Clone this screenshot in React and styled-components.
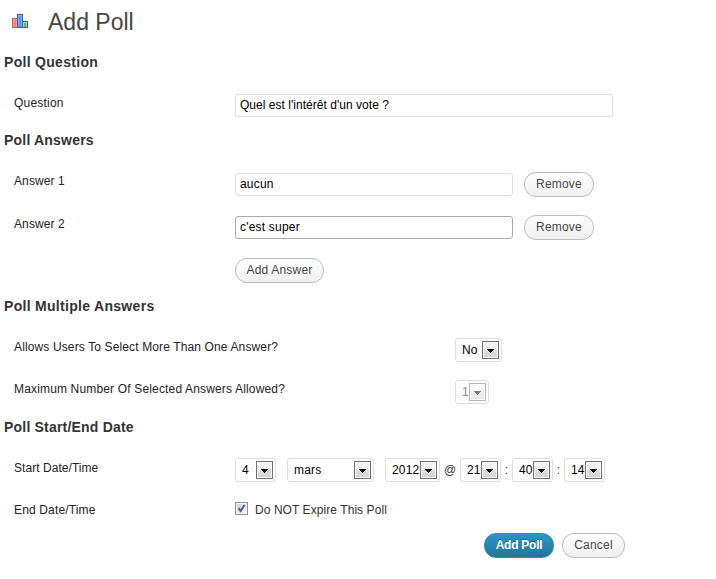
import React from "react";
import styled, { createGlobalStyle, css } from "styled-components";

const GlobalStyle = createGlobalStyle`
    body {
        margin: 0;
        background: #fff;
        color: #333;
        font-family: Arial, "Liberation Sans", sans-serif;
        font-size: 12px;
    }
`;

const Page = styled.form`
    width: 716px;
    height: 579px;
    overflow: hidden;
`;

const Header = styled.header`
    display: flex;
    align-items: center;
    gap: 20px;
    height: 44px;
    padding: 0 0 4px 12px;
`;

const Title = styled.h2`
    margin: 0;
    font-size: 23px;
    font-weight: normal;
    line-height: 30px;
    color: #464646;
    letter-spacing: 0;
`;

const Heading = styled.h3`
    margin: 0 0 9px;
    padding-left: 4px;
    font-size: 14px;
    line-height: 28px;
    color: #333;
    letter-spacing: ${props => props.$spacing || "0.3px"};
`;

const Row = styled.div`
    display: grid;
    grid-template-columns: ${props => props.$wide ? "441px" : "221px"} 1fr;
    align-items: center;
    height: ${props => props.$height}px;
    padding-left: 14px;
`;

const Label = styled.label`
    padding-bottom: ${props => props.$lift || 0}px;
    padding-top: ${props => props.$drop || 0}px;
    line-height: 14px;
    color: #222;
    letter-spacing: ${props => props.$spacing || "0.2px"};
`;

const Controls = styled.div`
    display: flex;
    align-items: center;
`;

const TextInput = styled.input`
    box-sizing: border-box;
    width: ${props => props.$width}px;
    height: 23px;
    margin: 0;
    padding: 0 4px 1px;
    border: 1px solid ${props => props.$active ? "#aaa" : "#dfdfdf"};
    border-radius: 3px;
    outline: none;
    background: #fff;
    color: #000;
    font: 12px Arial, "Liberation Sans", sans-serif;
    letter-spacing: ${props => props.$spacing || "0.2px"};
`;

const Button = styled.button`
    box-sizing: border-box;
    width: ${props => props.$width}px;
    height: 25px;
    margin: 0 0 0 ${props => props.$gap || 0}px;
    padding: 0 0 1px;
    border: 1px solid #bbb;
    border-radius: 12px;
    background: linear-gradient(#fff, #f0f0f0);
    color: #464646;
    font: 12px Arial, "Liberation Sans", sans-serif;
    letter-spacing: 0.2px;
    white-space: nowrap;

    ${props => props.$primary && css`
        border-color: #298cba;
        background: linear-gradient(#2a95c5, #21759b);
        color: #fff;
        font-weight: bold;
        letter-spacing: -0.25px;
        text-shadow: 0 -1px 0 rgba(0, 0, 0, 0.3);
    `}
`;

const SelectBox = styled.div`
    box-sizing: border-box;
    display: flex;
    align-items: center;
    justify-content: space-between;
    width: ${props => props.$width}px;
    height: 24px;
    margin-right: ${props => props.$gap || 0}px;
    padding: 0 2px 0 6px;
    border: 1px solid #dfdfdf;
    border-radius: 3px;
    color: ${props => props.$disabled ? "#8f7fa0" : "#000"};
    line-height: 20px;
`;

const SelectValue = styled.span`
    width: 0;
    padding-bottom: 1px;
    white-space: nowrap;
    letter-spacing: 0.2px;
`;

const ArrowButton = styled.span`
    box-sizing: border-box;
    display: flex;
    align-items: center;
    justify-content: center;
    width: 17px;
    height: 18px;
    padding-top: 2px;
    border: 1px solid #707070;
    background: linear-gradient(#f2f2f2 50%, #e0e0e0 50%, #d2d2d2);
    box-shadow: inset 0 0 0 1px #fafafa;
    opacity: ${props => props.$disabled ? 0.5 : 1};
`;

const Separator = styled.span`
    width: ${props => props.$width}px;
    text-align: center;
    line-height: 14px;
`;

const CheckBox = styled.span`
    box-sizing: border-box;
    display: flex;
    width: 13px;
    height: 13px;
    margin-right: 7px;
    border: 1px solid #8e8f8f;
    background: linear-gradient(135deg, #cbcfd5, #f6f6f6);
    box-shadow: inset 0 0 0 1px #f4f4f4;
`;

const CheckLabel = styled.span`
    padding-top: 3px;
    line-height: 14px;
    letter-spacing: 0.07px;
`;

const Footer = styled.footer`
    display: flex;
    padding: 6px 0 0 484px;
`;

const Bars = styled.svg`
    margin-bottom: 2px;
`;

const PollIcon = () => (
    <Bars width="16" height="14" viewBox="0 0 16 14">
        <rect x="0.5" y="4.5" width="5" height="9" fill="#ff9a92" stroke="#e8504e" />
        <rect x="2" y="6" width="2" height="7" fill="#f87c78" />
        <rect x="10.5" y="7.5" width="5" height="6" fill="#a4d8a4" stroke="#2f7040" />
        <rect x="12" y="9" width="2" height="4" fill="#66b06c" />
        <rect x="5.5" y="0.5" width="5" height="13" fill="#82b0f8" stroke="#2a5cc4" />
        <rect x="7" y="2" width="2" height="11" fill="#5890ec" />
    </Bars>
);

const Select = ({ value, width, gap, disabled }) => (
    <SelectBox $width={width} $gap={gap} $disabled={disabled}>
        <SelectValue>{value}</SelectValue>
        <ArrowButton $disabled={disabled}>
            <svg width="7" height="4" viewBox="0 0 7 4" shapeRendering="crispEdges">
                <path d="M0 0h7v1H0zM1 1h5v1H1zM2 2h3v1H2zM3 3h1v1H3z" fill="#000" />
            </svg>
        </ArrowButton>
    </SelectBox>
);

const App = () => (
    <>
        <GlobalStyle />
        <Page onSubmit={e => e.preventDefault()}>
            <Header>
                <PollIcon />
                <Title>Add Poll</Title>
            </Header>

            <Heading>Poll Question</Heading>
            <Row $height={41}>
                <Label $lift={5}>Question</Label>
                <TextInput $width={378} $spacing="0.03px" defaultValue="Quel est l'intérêt d'un vote ?" />
            </Row>

            <Heading $spacing="0.2px">Poll Answers</Heading>
            <Row $height={43}>
                <Label $lift={7} $spacing="0.1px">Answer 1</Label>
                <Controls>
                    <TextInput $width={278} defaultValue="aucun" />
                    <Button type="button" $width={70} $gap={11}>Remove</Button>
                </Controls>
            </Row>
            <Row $height={43}>
                <Label $lift={7} $spacing="0.1px">Answer 2</Label>
                <Controls>
                    <TextInput $width={278} $active defaultValue="c'est super" />
                    <Button type="button" $width={70} $gap={11}>Remove</Button>
                </Controls>
            </Row>
            <Row $height={43}>
                <span />
                <Controls>
                    <Button type="button" $width={89}>Add Answer</Button>
                </Controls>
            </Row>

            <Heading>Poll Multiple Answers</Heading>
            <Row $wide $height={42}>
                <Label $lift={6} $spacing="0.13px">Allows Users To Select More Than One Answer?</Label>
                <Select value="No" width={47} />
            </Row>
            <Row $wide $height={42}>
                <Label $lift={6} $spacing="0.16px">Maximum Number Of Selected Answers Allowed?</Label>
                <Select value="1" width={34} disabled />
            </Row>

            <Heading $spacing="0.2px">Poll Start/End Date</Heading>
            <Row $height={40}>
                <Label $lift={4} $spacing="0.05px">Start Date/Time</Label>
                <Controls>
                    <Select value="4" width={41} gap={11} />
                    <Select value="mars" width={87} gap={11} />
                    <Select value="2012" width={55} />
                    <Separator $width={20}>@</Separator>
                    <Select value="21" width={41} />
                    <Separator $width={11}>:</Separator>
                    <Select value="40" width={41} />
                    <Separator $width={11}>:</Separator>
                    <Select value="14" width={41} />
                </Controls>
            </Row>
            <Row $height={37}>
                <Label $drop={3} $spacing="0.15px">End Date/Time</Label>
                <Controls>
                    <CheckBox role="checkbox" aria-checked="true">
                        <svg width="11" height="11" viewBox="0 0 11 11">
                            <path d="M2.5 5.2 L4.6 8 L8.6 2" fill="none" stroke="#4a5f97" strokeWidth="2" />
                        </svg>
                    </CheckBox>
                    <CheckLabel>Do NOT Expire This Poll</CheckLabel>
                </Controls>
            </Row>

            <Footer>
                <Button type="submit" $primary $width={70}>Add Poll</Button>
                <Button type="button" $width={63} $gap={8}>Cancel</Button>
            </Footer>
        </Page>
    </>
);

export default App;
